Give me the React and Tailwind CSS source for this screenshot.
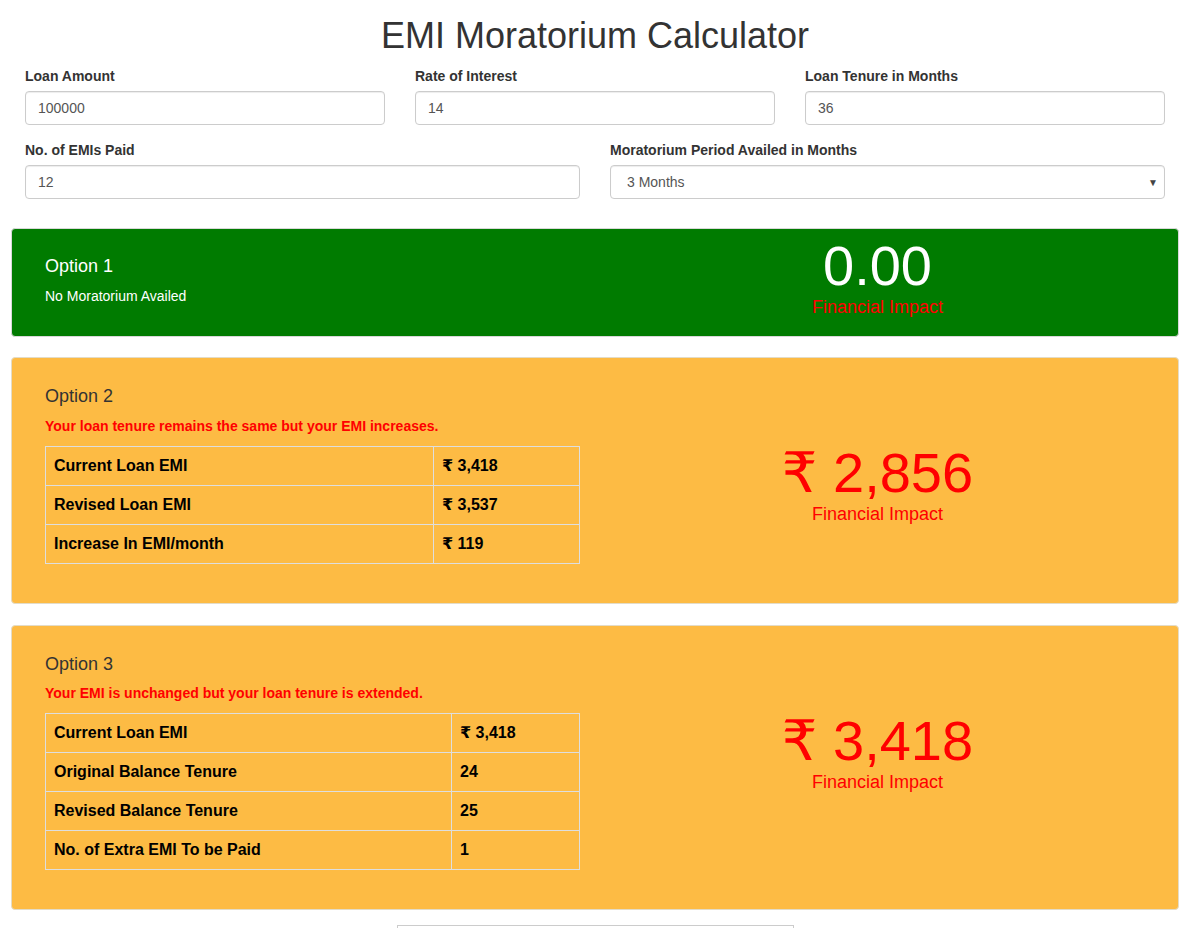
import React from "react";

const Field = ({ label, value }) => (
  <div className="px-[15px]">
    <div className="text-[14px] leading-[20px] font-bold text-[#333] mb-[5px]">{label}</div>
    <div className="h-[34px] border border-[#ccc] rounded-[4px] bg-white flex items-center px-[12px] text-[14px] text-[#555] shadow-[inset_0_1px_1px_rgba(0,0,0,0.075)]">
      {value}
    </div>
  </div>
);

const Amount = ({ value, color }) => (
  <div className="flex flex-col items-center">
    <div className={`text-[56px] leading-[56px] ${color}`}>{value}</div>
    <div className="mt-[3px] text-[18px] leading-[20px] text-[#ff0000]">Financial Impact</div>
  </div>
);

const Table = ({ rows, c1 }) => (
  <table className="w-[535px] table-fixed border-collapse">
    <colgroup>
      <col style={{ width: c1 }} />
      <col />
    </colgroup>
    <tbody>
      {rows.map(([a, b]) => (
        <tr key={a}>
          <td className="border border-[#dedede] px-[8px] py-[8px] text-[16px] leading-[22px] font-bold text-black">{a}</td>
          <td className="border border-[#dedede] px-[8px] py-[8px] text-[16px] leading-[22px] font-bold text-black">{b}</td>
        </tr>
      ))}
    </tbody>
  </table>
);

const OptionCard = ({ title, note, rows, c1, amount, className, noteGap, tableGap }) => (
  <div className={`mx-px bg-[#fdbb44] border border-[#e3dcc8] rounded-[4px] px-[33px] pt-[28px] pb-[39px] grid grid-cols-2 gap-[30px] items-start ${className}`}>
    <div>
      <div className="text-[18px] leading-[20px] text-[#333]">{title}</div>
      <div className={`${noteGap} text-[14px] leading-[18px] font-bold text-[#ff0000]`}>{note}</div>
      <div className={tableGap}>
        <Table rows={rows} c1={c1} />
      </div>
    </div>
    <div className="pt-[59px]">
      <Amount value={amount} color="text-[#ff0000]" />
    </div>
  </div>
);

export default function App() {
  return (
    <div className="bg-white min-h-[928px] overflow-hidden font-['Liberation_Sans','DejaVu_Sans',Arial,sans-serif]">
      <div className="w-[1170px] ml-[10px]">
        <h1 className="pt-[16px] text-center text-[36px] leading-[40px] text-[#333] font-normal">
          EMI Moratorium Calculator
        </h1>

        <div className="mt-[10px] grid grid-cols-3">
          <Field label="Loan Amount" value="100000" />
          <Field label="Rate of Interest" value="14" />
          <Field label="Loan Tenure in Months" value="36" />
        </div>

        <div className="mt-[15px] grid grid-cols-2">
          <Field label="No. of EMIs Paid" value="12" />
          <div className="px-[15px]">
            <div className="text-[14px] leading-[20px] font-bold text-[#333] mb-[5px]">
              Moratorium Period Availed in Months
            </div>
            <div className="h-[34px] border border-[#ccc] rounded-[4px] bg-white flex items-center justify-between pl-[16px] pr-[6px] text-[14px] text-[#555] shadow-[inset_0_1px_1px_rgba(0,0,0,0.075)]">
              <span>3 Months</span>
              <span className="text-[10px] text-[#444]">▼</span>
            </div>
          </div>
        </div>

        <div className="mt-[29px] mx-px bg-[#007b00] border border-[#d8d8d8] rounded-[4px] px-[33px] pb-[19px] grid grid-cols-2 gap-[30px] items-start">
          <div className="pt-[27px]">
            <div className="text-[18px] leading-[20px] text-white">Option 1</div>
            <div className="mt-[11px] text-[14px] leading-[18px] text-white">No Moratorium Availed</div>
          </div>
          <div className="pt-[9px]">
            <Amount value="0.00" color="text-white" />
          </div>
        </div>

        <OptionCard
          className="mt-[20px]"
          noteGap="mt-[11px]"
          tableGap="mt-[11px]"
          title="Option 2"
          note="Your loan tenure remains the same but your EMI increases."
          c1="388px"
          amount="₹ 2,856"
          rows={[
            ["Current Loan EMI", "₹ 3,418"],
            ["Revised Loan EMI", "₹ 3,537"],
            ["Increase In EMI/month", "₹ 119"],
          ]}
        />

        <OptionCard
          className="mt-[21px]"
          noteGap="mt-[10px]"
          tableGap="mt-[11px]"
          title="Option 3"
          note="Your EMI is unchanged but your loan tenure is extended."
          c1="406px"
          amount="₹ 3,418"
          rows={[
            ["Current Loan EMI", "₹ 3,418"],
            ["Original Balance Tenure", "24"],
            ["Revised Balance Tenure", "25"],
            ["No. of Extra EMI To be Paid", "1"],
          ]}
        />

        <div className="mt-[15px] mx-auto w-[397px] h-[40px] border border-[#ccc]"></div>
      </div>
    </div>
  );
}
